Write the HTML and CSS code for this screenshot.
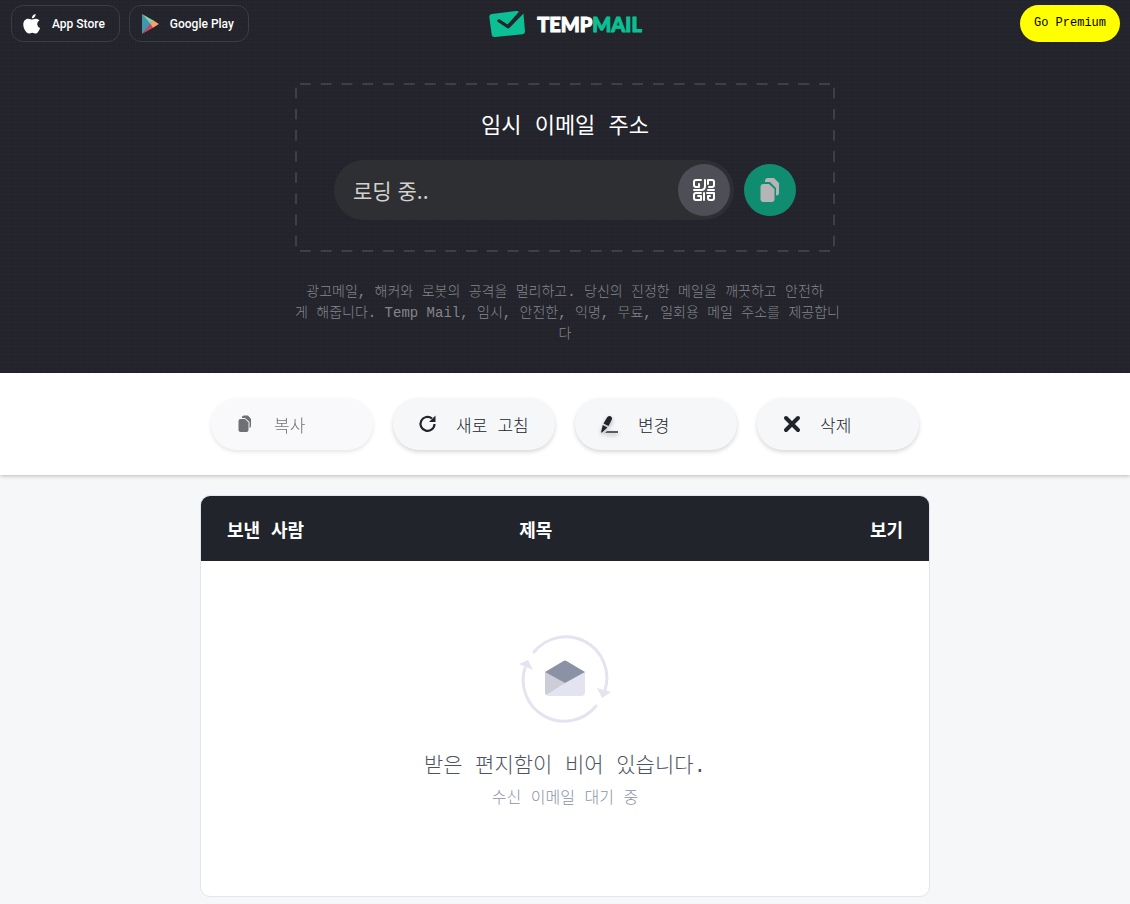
FILE: index.html
```
<!DOCTYPE html>
<html lang="ko">
<head>
    <meta charset="UTF-8">
    <meta name="viewport" content="width=device-width, initial-scale=1.0">
    <title>Temp Mail</title>
    <link rel="stylesheet" href="styles.css">
</head>
<body>
    <header class="hero">
        <nav class="navbar">
            <div class="stores">
                <a class="store" href="#">
                    <svg width="20" height="20" viewBox="0 0 20 20" fill="#fff">
                        <path d="M13.6 0c.2 2-1.500 4.300-3.700 4.400C9.600 2.400 11.400.3 13.600 0zM10.200 5.600c.7 0 1.800-1.100 3.800-.9 1.400.1 2.600.7 3.400 1.800-3.100 1.900-2.700 6.200.7 7.500-.8 2.300-2.500 5.500-4.400 5.600-1.300 0-1.700-.8-3.400-.8s-2.100.8-3.400.8C4.600 19.600 1.300 15 1.300 10.600c0-3.700 2.200-5.900 4.800-5.900 1.700 0 3 .9 4.100.9z"/>
                    </svg>
                    <span>App Store</span>
                </a>
                <a class="store" href="#">
                    <svg width="20" height="20" viewBox="0 0 20 20">
                        <path d="M2 0v20L11 10z" fill="#4196ad"/>
                        <path d="M2 0l11.500 6.500L10.500 10z" fill="#8ccfae"/>
                        <path d="M2 20l11.500-6.500L10.500 10z" fill="#d0455c"/>
                        <path d="M13 6.300L19 10l-6 3.700L10.500 10z" fill="#f5a26f"/>
                    </svg>
                    <span>Google Play</span>
                </a>
            </div>
            <a class="logo" href="#">
                <svg width="37" height="28" viewBox="0 0 37 28">
                    <path d="M3 4L27 1q2-.2 3 .8L18.500 14.500l-7.500-5q-2-1-2.800.8-.3 1 .8 1.800l9 6q1.500.8 2.600-.4L34.500 3.500l1.500 18q0 2.500-2.500 2.800L6 27q-3 .3-3.300-2.500L.300 7Q.200 4.400 3 4z" fill="#0ac094"/>
                </svg>
                <span class="logo-text">TEMP<span class="logo-mail">MAIL</span></span>
            </a>
            <a class="premium" href="#">Go Premium</a>
        </nav>

        <section class="address-box">
            <label class="address-title" for="mail">임시 이메일 주소</label>
            <div class="address-row">
                <div class="address-field">
                    <input id="mail" type="text" value="로딩 중.." readonly>
                    <button class="round qr" type="button" aria-label="QR">
                        <svg width="24" height="24" viewBox="0 0 24 24" fill="none" stroke="#fff" stroke-width="2" stroke-linecap="round" stroke-linejoin="round">
                            <path d="M9 2H4Q2 2 2 4v3q0 2 2 2h3V6M13 2v6q0 4-4 4H2M16 6V2h4q2 0 2 2v3q0 2-2 2h-3M16 12h6"/>
                            <path d="M9 15H4q-2 0-2 2v3q0 2 2 2h5v-4H6M12 15v7M15 15h7v5q0 2-2 2h-2q-2 0-2-2v-2h2"/>
                        </svg>
                    </button>
                </div>
                <button class="round copy" type="button" aria-label="복사">
                    <svg width="20" height="26" viewBox="0 0 20 26" fill="#b5b5b8">
                        <path d="M5 5V4q0-3 3-3h6l5 5v10q0 2.500-3 2.500V11l-6-6z"/>
                        <path d="M3.500 7H9l5.500 5v10q0 3-3 3h-8q-3 0-3-3V10q0-3 3-3z"/>
                    </svg>
                </button>
            </div>
        </section>

        <p class="intro">광고메일, 해커와 로봇의 공격을 멀리하고. 당신의 진정한 메일을 깨끗하고 안전하<br>게 해줍니다. Temp Mail, 임시, 안전한, 익명, 무료, 일회용 메일 주소를 제공합니<br>다</p>
    </header>

    <div class="actions">
        <button class="action" type="button" disabled>
            <svg width="20" height="20" viewBox="0 0 20 20" fill="#22242c">
                <path d="M7 3q0-1.500 2-1.500h4l3 3.500v7q0 1.500-1.500 2V8L10 4H7z"/>
                <path d="M5.500 5H10l3.500 3.500V16q0 2-2 2h-6q-2 0-2-2V7q0-2 2-2z"/>
            </svg>
            <span>복사</span>
        </button>
        <button class="action" type="button">
            <svg width="20" height="20" viewBox="0 0 20 20">
                <path d="M17.500 10a7 7 0 1 1-2.500-5.500" fill="none" stroke="#22242c" stroke-width="2.200"/>
                <path d="M18.500 1.500v6.500H12z" fill="#22242c"/>
            </svg>
            <span>새로 고침</span>
        </button>
        <button class="action" type="button">
            <svg class="pen" width="20" height="20" viewBox="0 0 20 20" fill="#22242c">
                <path d="M8 3.500Q9.300 1.200 11.600 2.300q2.200 1.200 1.100 3.500L9.500 12 4.500 9.500z"/>
                <path d="M3.700 11l4.700 2.500L3 18.500H2z"/>
                <path d="M8 17h11v2H6z" fill="#5a5b62"/>
            </svg>
            <span>변경</span>
        </button>
        <button class="action" type="button">
            <svg width="20" height="20" viewBox="0 0 20 20" stroke="#22242c" stroke-width="4" stroke-linecap="round">
                <path d="M5 4l12 12M17 4L5 16"/>
            </svg>
            <span>삭제</span>
        </button>
    </div>

    <main>
        <div class="inbox">
            <table>
                <thead>
                    <tr>
                        <th class="sender">보낸 사람</th>
                        <th class="subject">제목</th>
                        <th class="view">보기</th>
                    </tr>
                </thead>
                <tbody>
                    <tr>
                        <td class="empty" colspan="3">
                            <svg width="96" height="88" viewBox="0 0 96 88">
                                <g fill="none" stroke="#e4e4f0" stroke-width="3" stroke-linecap="round">
                                    <path d="M17 17A41 41 0 0 1 88 55"/>
                                    <path d="M79 71A41 41 0 0 1 8 33"/>
                                </g>
                                <path d="M2 29l9-4 5 10z" fill="#e4e4f0"/>
                                <path d="M80 53l14 4-9 6z" fill="#e4e4f0"/>
                                <path d="M28 37h40v20q0 4-4 4H32q-4 0-4-4z" fill="#e4e4f0"/>
                                <path d="M28 37l20 11-19 12q-1-1-1-3z" fill="#cdcdd8"/>
                                <path d="M46.500 26q1.500-1 3 0L68 37 48 48 28 37z" fill="#8c92a6"/>
                            </svg>
                            <p class="empty-title">받은 편지함이 비어 있습니다.</p>
                            <p class="empty-text">수신 이메일 대기 중</p>
                        </td>
                    </tr>
                </tbody>
            </table>
        </div>
    </main>
</body>
</html>
```

FILE: styles.css
```
* {
    box-sizing: border-box;
}
body {
    margin: 0;
    background-color: #f6f7f9;
    color: #22242c;
    font-family: 'Liberation Mono', 'Noto Sans CJK KR', monospace;
    font-size: 16px;
}
a {
    text-decoration: none;
}
button {
    border: none;
    padding: 0;
    font-family: inherit;
    cursor: pointer;
}
svg {
    display: block;
    flex: none;
}

/* header */
.hero {
    background-color: #23242c;
    background-image:
        repeating-linear-gradient(90deg, rgba(255, 255, 255, 0.012) 0 1px, transparent 1px 3px),
        repeating-linear-gradient(0deg, rgba(0, 0, 0, 0.05) 0 1px, transparent 1px 4px);
    padding-bottom: 28px;
}
.navbar {
    display: grid;
    grid-template-columns: 1fr auto 1fr;
    align-items: center;
    padding: 5px 10px 0 11px;
}
.stores {
    display: flex;
    gap: 9px;
}
.store {
    display: flex;
    align-items: center;
    gap: 10px;
    height: 37px;
    padding: 0 14px 0 10px;
    border: 1px solid #3b3c45;
    border-radius: 12px;
    color: #fff;
    font: 500 12px Roboto, sans-serif;
}
.logo {
    display: flex;
    align-items: center;
    gap: 11px;
}
.logo-text {
    color: #fff;
    font: 900 20px/28px Lato, sans-serif;
    -webkit-text-stroke: 1px currentColor;
}
.logo-mail {
    color: #0ac094;
}
.premium {
    justify-self: end;
    padding: 0 14px;
    border-radius: 19px;
    background-color: #ff0;
    color: #000;
    font-size: 12px;
    line-height: 37px;
}

/* mail address, dashes are drawn with one gradient per side */
.address-box {
    max-width: 540px;
    margin: 41px auto 0;
    padding: 29px 39px 32px;
    --dash: transparent 25%, #3e3f48 25% 75%, transparent 75%;
    background:
        linear-gradient(90deg, var(--dash)) left top / 21px 2px round no-repeat,
        linear-gradient(90deg, var(--dash)) left bottom / 21px 2px round no-repeat,
        linear-gradient(var(--dash)) left top / 2px 21px no-repeat round,
        linear-gradient(var(--dash)) right top / 2px 21px no-repeat round;
}
.address-title {
    display: block;
    margin-bottom: 16px;
    color: #fff;
    font-size: 22px;
    line-height: 32px;
    text-align: center;
}
.address-row {
    display: flex;
    align-items: center;
    gap: 10px;
}
.address-field {
    display: flex;
    flex: 1;
    align-items: center;
    height: 60px;
    padding: 0 4px 0 19px;
    border-radius: 30px;
    background-color: #2e2f33;
}
.address-field input {
    flex: 1;
    min-width: 0;
    padding: 0;
    border: none;
    outline: none;
    background: none;
    color: #d2d2cf;
    font: 400 21px 'Noto Sans CJK KR', sans-serif;
}
.round {
    display: flex;
    flex: none;
    align-items: center;
    justify-content: center;
    width: 52px;
    height: 52px;
    border-radius: 50%;
}
.qr {
    background-color: #4e4e56;
}
.copy {
    background-color: #108d71;
}
.intro {
    max-width: 540px;
    margin: 30px auto 0;
    color: #85868b;
    font-size: 14px;
    font-weight: 300;
    line-height: 21px;
    text-align: center;
    white-space: nowrap;
}

/* buttons */
.actions {
    display: flex;
    flex-wrap: wrap;
    justify-content: center;
    gap: 20px;
    padding: 25px 20px;
    background-color: #fff;
    box-shadow: 0 1px 4px rgba(0, 0, 0, 0.25);
}
.action {
    display: flex;
    align-items: center;
    gap: 19px;
    width: 162px;
    height: 52px;
    padding: 0 23px 0 24px;
    border-radius: 26px;
    background-color: #f6f7f9;
    box-shadow: 0 2px 4px rgba(0, 0, 0, 0.16);
    color: #22242c;
    font-size: 17px;
    font-weight: 300;
}
.action:disabled {
    opacity: 0.65;
    cursor: default;
}
.pen {
    filter: drop-shadow(0 2px 2px rgba(0, 0, 0, 0.3));
}

/* inbox */
main {
    padding: 20px 20px 8px;
}
.inbox {
    max-width: 730px;
    margin: 0 auto;
    border: 1px solid #e4e4f0;
    border-radius: 10px;
    background-color: #fff;
    overflow: hidden;
}
table {
    width: 100%;
    border-collapse: collapse;
    table-layout: fixed;
}
th {
    height: 65px;
    padding: 0 26px;
    background-color: #22242c;
    color: #fff;
    font-size: 18px;
    font-weight: 700;
}
.sender {
    width: 40%;
    text-align: left;
}
.subject {
    width: 12%;
    padding: 0;
}
.view {
    text-align: right;
}
.empty {
    padding: 74px 20px 85px;
    text-align: center;
    font-weight: 300;
}
.empty svg {
    margin: 0 auto;
}
.empty-title {
    margin: 28px 0 0;
    color: #4e5361;
    font-size: 21px;
    line-height: 32px;
}
.empty-text {
    margin: 4px 0 0;
    color: #8c92a6;
    line-height: 24px;
}
```
